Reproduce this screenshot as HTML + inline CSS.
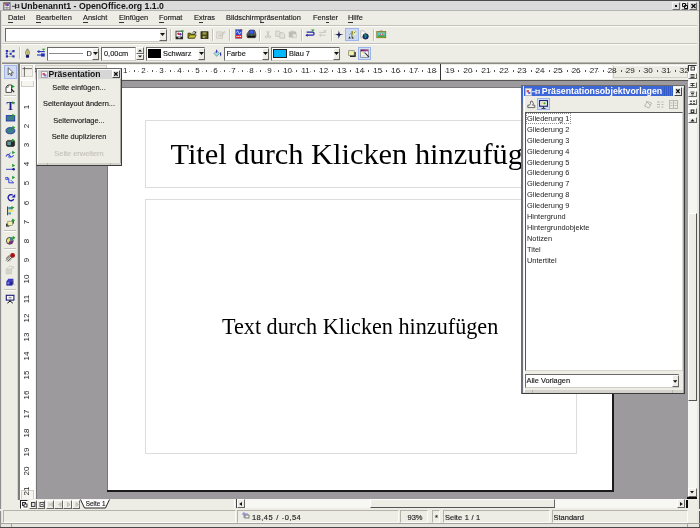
<!DOCTYPE html>
<html lang="de"><head><meta charset="utf-8"><title>Unbenannt1 - OpenOffice.org 1.1.0</title>
<style>
html,body{margin:0;padding:0;}
body{width:700px;height:528px;overflow:hidden;position:relative;background:#eeede5;font-family:"Liberation Sans",sans-serif;font-size:7.4px;color:#222;}
div,span,svg{position:absolute;box-sizing:border-box;}
span{white-space:nowrap;line-height:1;}
.t{font-size:7.4px;color:#1c1c1c;-webkit-text-stroke-width:0.15px;}
.m u{text-decoration:none;display:inline-block;position:static;height:8.6px;border-bottom:1px solid #333;}
.sunk{background:#fff;border:1.3px solid #6a6a6a;border-right:1px solid #cfcec6;border-bottom:1px solid #cfcec6;}
.btn{background:#eeede5;border:1px solid #fff;border-right-color:#666;border-bottom-color:#666;}
.sepv{width:2px;border-left:1px solid #c4c3bb;border-right:1px solid #fbfbf8;}
.seph{height:2px;border-top:1px solid #c4c3bb;border-bottom:1px solid #fbfbf8;}
.rt{font-size:8px;color:#222;transform:translate(-50%,0);}
.vt{font-size:8px;color:#222;transform:translate(-50%,-50%) rotate(-90deg);}
.ic{overflow:visible;filter:blur(0.25px);}
.li{font-size:7.4px;color:#222;left:527px;}
</style></head><body><div id="app" style="left:0;top:0;width:700px;height:528px;overflow:hidden;will-change:transform;">

<div style="left:0px;top:0px;width:700px;height:10.8px;background:#dbdbdb;border-bottom:0.8px solid #b4b4b4;"></div>
<div style="left:0px;top:0px;width:700px;height:0.7px;background:#4c4c4c;"></div>
<svg class="ic" style="left:3px;top:2px;" width="8" height="8.5" viewBox="0 0 8 8.5"><rect x="0.300" y="0.300" width="7.200" height="7.800" fill="#5a5a5a"/><rect x="1.300" y="1.800" width="5.200" height="5.600" fill="#f4f4f4"/><rect x="1.600" y="1.600" width="2.400" height="2.200" fill="#cc5566"/><rect x="3.600" y="1.800" width="2.200" height="2.200" fill="#4a4ad0"/><path d="M3.900 4.400v3M1.300 5.800h5.200" stroke="#666" stroke-width="0.700"/></svg>
<svg style="left:11.500px;top:2.500px;" width="8" height="7" viewBox="0 0 8 7"><path d="M0 3.300h3" stroke="#333" stroke-width="0.900"/><path d="M3.500 0.800v5M6.700 1.300v4" stroke="#222" stroke-width="1.100"/><path d="M3.500 2.100h3.200M3.500 4.500h3.200" stroke="#333" stroke-width="0.700"/></svg>
<span class="tt" style="left:21px;top:1.7px;font-size:8.7px;font-weight:bold;color:#111;">Unbenannt1 - OpenOffice.org 1.1.0</span>
<div style="left:672.3px;top:2.2px;width:7.6px;height:7.6px;background:#dedede;border:1px solid #f4f4f4;border-right-color:#6c6c6c;border-bottom-color:#6c6c6c;"></div>
<div style="left:680.7px;top:2.2px;width:7.6px;height:7.6px;background:#dedede;border:1px solid #f4f4f4;border-right-color:#6c6c6c;border-bottom-color:#6c6c6c;"></div>
<div style="left:689px;top:2.2px;width:7.6px;height:7.6px;background:#dedede;border:1px solid #f4f4f4;border-right-color:#6c6c6c;border-bottom-color:#6c6c6c;"></div>
<svg style="left:672px;top:2px;" width="26" height="8" viewBox="0 0 26 8"><rect x="3" y="3" width="2" height="2" fill="#111"/><path d="M10.5 1.5h3v3h-3zM12.5 3.5h3v3h-3z" stroke="#111" stroke-width="1" fill="none"/><path d="M19.5 2l4 4M23.5 2l-4 4" stroke="#111" stroke-width="1.4"/></svg>
<span class="t m" style="left:8px;top:13.9px;"><u>D</u>atei</span>
<span class="t m" style="left:36px;top:13.9px;"><u>B</u>earbeiten</span>
<span class="t m" style="left:83px;top:13.9px;"><u>A</u>nsicht</span>
<span class="t m" style="left:119px;top:13.9px;"><u>E</u>infügen</span>
<span class="t m" style="left:159px;top:13.9px;"><u>F</u>ormat</span>
<span class="t m" style="left:194px;top:13.9px;">E<u>x</u>tras</span>
<span class="t m" style="left:226px;top:13.9px;">Bildschirm<u>p</u>räsentation</span>
<span class="t m" style="left:313px;top:13.9px;">Fen<u>s</u>ter</span>
<span class="t m" style="left:348px;top:13.9px;"><u>H</u>ilfe</span>
<div class="seph" style="left:0px;top:25px;width:700px;height:2px;"></div>
<div class="sunk" style="left:5px;top:28px;width:162px;height:13.5px;"></div>
<div class="btn" style="left:158.5px;top:29px;width:8px;height:11.5px;"></div>
<svg style="left:160px;top:33px;" width="5" height="3" viewBox="0 0 5 3"><path d="M0 0h5L2.5 3z" fill="#111"/></svg>
<div class="sepv" style="left:169.5px;top:29px;width:2px;height:12px;"></div>
<div class="sepv" style="left:211.5px;top:29px;width:2px;height:12px;"></div>
<div class="sepv" style="left:229px;top:29px;width:2px;height:12px;"></div>
<div class="sepv" style="left:258.5px;top:29px;width:2px;height:12px;"></div>
<div class="sepv" style="left:300.5px;top:29px;width:2px;height:12px;"></div>
<div class="sepv" style="left:330.5px;top:29px;width:2px;height:12px;"></div>
<div class="sepv" style="left:372.5px;top:29px;width:2px;height:12px;"></div>
<div class="seph" style="left:0px;top:43px;width:700px;height:2px;"></div>
<svg class="ic" style="left:175px;top:29.5px;" width="10" height="10" viewBox="0 0 10 10"><rect x="1" y="1.2" width="6.6" height="7.6" fill="#fff" stroke="#333" stroke-width="0.9"/><rect x="1" y="6.6" width="6.6" height="2.4" fill="#222"/><rect x="3.2" y="7.2" width="2.2" height="1" fill="#ddd"/><circle cx="3.4" cy="3.8" r="1.2" fill="#cc3344"/><circle cx="5.4" cy="4.3" r="1.2" fill="#6633bb"/><path d="M5.6 0.6h3.6l-1.8 2.2z" fill="#1f9a2c"/></svg>
<svg class="ic" style="left:187px;top:29.5px;" width="10" height="10" viewBox="0 0 10 10"><path d="M1 3.2h2.6l0.8 0.9h3.2v4H1z" fill="#8e8a1c" stroke="#33330a" stroke-width="0.8"/><path d="M1 8.1l1.6-3.2h6.6l-1.6 3.2z" fill="#c9c43c" stroke="#33330a" stroke-width="0.7"/><path d="M5.6 2.6c1-1.2 2.2-1.2 3-0.4" stroke="#111" stroke-width="0.8" fill="none"/><path d="M9.2 1.2v2.2h-2.2z" fill="#111"/></svg>
<svg class="ic" style="left:200px;top:29.5px;" width="10" height="10" viewBox="0 0 10 10"><rect x="1" y="1.8" width="7" height="6.6" fill="#4a4a12" stroke="#1c1c05" stroke-width="0.8"/><rect x="2.6" y="2.2" width="3.8" height="2.4" fill="#9a9a52"/><rect x="2.8" y="6" width="3.4" height="2.2" fill="#b4b47a"/><rect x="4.8" y="6.4" width="0.9" height="1.6" fill="#222"/></svg>
<svg class="ic" style="left:216px;top:29.5px;" width="10" height="10" viewBox="0 0 10 10"><g stroke="#c6c5bd" stroke-width="0.9" fill="none"><rect x="0.8" y="2" width="5.6" height="6.2"/><path d="M2 4h3M2 5.8h2.4M4 7l1-2.4 3.6-3 0.6 0.8-3.4 3.2z"/></g></svg>
<svg class="ic" style="left:235px;top:29.3px;" width="8" height="10" viewBox="0 0 8 10"><rect x="0.5" y="0.5" width="6.4" height="8.8" fill="#2348dd"/><rect x="0.5" y="5.9" width="6.4" height="3.4" fill="#e22222"/><path d="M5 0.3h2.1v2.3z" fill="#7a1414"/><path d="M1.6 3.6c0.8-2 1.6-2 2 0s1.4 1.6 2-0.4" stroke="#fff" stroke-width="0.8" fill="none"/><path d="M1.4 7.4h4.6" stroke="#fff" stroke-width="1" stroke-dasharray="1.2 0.5"/><rect x="0.5" y="0.5" width="6.4" height="8.8" fill="none" stroke="#7a7a8a" stroke-width="0.5"/></svg>
<svg class="ic" style="left:245.5px;top:29.3px;" width="11" height="10" viewBox="0 0 11 10"><path d="M1 4.800L3.400 1.400h5.200l1.200 3.400v2.600c0 0.900-0.500 1.300-1.300 1.300H2.200C1.400 8.700 1 8.200 1 7.400z" fill="#6a6a6a" stroke="#2a2a2a" stroke-width="0.700"/><path d="M3.700 1h4.400l-0.700 4H2.900z" fill="#3a5af0" stroke="#334" stroke-width="0.500"/><path d="M1.200 5.400h8.400v2c0 0.900-0.500 1.300-1.300 1.300H2.400C1.600 8.700 1.200 8.200 1.200 7.400z" fill="#3c3c3c"/><rect x="2" y="7" width="6.800" height="1.200" fill="#0c0c0c"/><rect x="4.800" y="5.700" width="1.800" height="0.900" fill="#22aa33"/></svg>
<svg class="ic" style="left:263.5px;top:30.3px;" width="8" height="9" viewBox="0 0 8 9"><g stroke="#c4c3bb" stroke-width="0.9" fill="none"><path d="M2.6 0.8l2.2 5M5.4 0.8l-2.2 5"/><circle cx="2.4" cy="6.8" r="1.1"/><circle cx="5.6" cy="6.800" r="1.100"/></g></svg>
<svg class="ic" style="left:275px;top:30.3px;" width="11" height="9" viewBox="0 0 11 9"><g stroke="#c4c3bb" stroke-width="0.9" fill="#e4e3db"><path d="M0.8 1h3.4l1.400 1.400v4H0.800z"/><path d="M4.800 2.800h3.400l1.400 1.400v4H4.800z"/></g></svg>
<svg class="ic" style="left:288px;top:30px;" width="10" height="9" viewBox="0 0 10 9"><rect x="0.8" y="1.6" width="7.4" height="6" rx="0.6" fill="#bdbcb4"/><rect x="3" y="0.700" width="3" height="1.600" fill="#c8c7bf"/><rect x="4.600" y="4" width="3.800" height="3.800" fill="#e6e5dd" stroke="#c4c3bb" stroke-width="0.6"/></svg>
<svg class="ic" style="left:305px;top:29.3px;" width="11" height="9" viewBox="0 0 11 9"><path d="M1.6 3.200h6.200c1.600 0 1.600 3 0 3H1.600" stroke="#2222a8" stroke-width="1.3" fill="none"/><path d="M0.400 6.200l2.200-1.500v3z" fill="#2222a8"/><path d="M6 0.500h3.600l-1.800 2.300z" fill="#1f9a2c"/></svg>
<svg class="ic" style="left:318px;top:29.3px;" width="10" height="9" viewBox="0 0 10 9"><g stroke="#c4c3bb" stroke-width="0.9" fill="none"><path d="M1 3.400h6.400M7.400 6.200H2M5.600 1.600l2.600 1.800M3 7.600L1.400 6.200 3 5"/><path d="M6 1h2.800l-1.400 1.800z" fill="#d0cfc7" stroke="none"/></g></svg>
<svg class="ic" style="left:334px;top:29.5px;" width="10" height="10" viewBox="0 0 10 10"><path d="M4.900 0.300C5.100 2.800 5.600 3.800 6.200 4 7.200 4.200 8.400 4.300 9.500 4.600 8.400 4.900 6.800 5 6 5.400 5.400 6 5.100 7.400 4.900 9.100 4.700 7.400 4.400 6 3.800 5.400 3 5 1.400 4.900 0.300 4.600 1.400 4.300 2.600 4.200 3.600 4 4.200 3.800 4.700 2.800 4.900 0.300z" fill="#15153f"/><path d="M4.900 0.300C5.100 2.800 5.600 3.800 6.200 4L4.900 4.700zM4.900 9.100C4.700 7.400 4.400 6 3.800 5.400L4.900 4.700z" fill="#3a4ab0"/></svg>
<div style="left:345px;top:28px;width:13.6px;height:12.8px;background:#cbd8f1;border:1px solid #9fb7e8;"></div>
<svg class="ic" style="left:346.5px;top:29.5px;" width="11" height="10" viewBox="0 0 11 10"><rect x="4.600" y="0.800" width="4.600" height="4" fill="#efefb0"/><path d="M4.400 1.200c1.400-0.600 2 0.400 1.600 1.600l-0.600 2.600 1 3H4.600l-0.400-2.600z" fill="#8a8a34"/><path d="M1.400 8.600l1.200-2.400 1.200 2.400z" fill="#1e2a3a"/><path d="M5 8.600l0.800-2 0.900 2z" fill="#1e2a3a"/><path d="M2.400 4.600l1.400-1.400" stroke="#666" stroke-width="0.700"/><path d="M6.600 3.200l2-1.600" stroke="#6a6a2a" stroke-width="0.800"/></svg>
<svg class="ic" style="left:360px;top:29.5px;" width="10" height="10" viewBox="0 0 10 10"><path d="M0.800 0.800h3l1.400 1.400v5.400H0.800z" fill="#fafafa" stroke="#aaa" stroke-width="0.700"/><circle cx="5.600" cy="6.400" r="2.700" fill="#123a9a" stroke="#111" stroke-width="0.700"/><path d="M4.200 5.200c1-0.800 2-0.200 1.800 0.800s-1 1-0.800 2" stroke="#2bb43a" stroke-width="1.100" fill="none"/></svg>
<svg class="ic" style="left:375.8px;top:28.8px;" width="11" height="10" viewBox="0 0 11 10"><path d="M3.800 2.600c0-1.600 3-1.600 3 0" stroke="#999" stroke-width="0.800" fill="none"/><rect x="0.800" y="2.600" width="9" height="6.200" fill="#b8a81e" stroke="#6a5c0c" stroke-width="0.600"/><rect x="1.800" y="3.500" width="7" height="4.300" fill="#46cfe0"/><rect x="1.800" y="6.400" width="7" height="1.400" fill="#2fa83a"/><circle cx="5.600" cy="5.600" r="1.300" fill="#e84a4a"/><circle cx="5.600" cy="5.200" r="0.600" fill="#fff"/></svg>
<div class="sepv" style="left:18.5px;top:47px;width:2px;height:12px;"></div>
<svg class="ic" style="left:5px;top:48.5px;" width="11" height="10" viewBox="0 0 11 10"><path d="M2 2.200h6.400M2 7.400h6.400M2 2.200v5.200" stroke="#999" stroke-width="0.800" fill="none"/><path d="M8.400 2.200L5.600 4.800 8.400 7.400" stroke="#999" stroke-width="0.800" fill="none"/><g fill="#2434b8"><rect x="0.800" y="1" width="2.200" height="2.200"/><rect x="7.400" y="1" width="2.200" height="2.200"/><rect x="0.800" y="6.300" width="2.200" height="2.200"/><rect x="7.400" y="6.300" width="2.200" height="2.200"/><rect x="4.600" y="3.800" width="2" height="2"/><rect x="0.800" y="3.800" width="1.600" height="1.600"/></g></svg>
<svg class="ic" style="left:24px;top:48px;" width="7" height="11" viewBox="0 0 7 11"><path d="M3.500 0.800C5.400 3 5.800 5 4.800 7H2.200C1.200 5 1.600 3 3.500 0.800z" fill="#dede98" stroke="#55552a" stroke-width="0.700"/><path d="M3.500 2.400v4" stroke="#8a8a4a" stroke-width="0.600"/><rect x="1.900" y="7" width="3.200" height="2.800" rx="0.800" fill="#141466"/></svg>
<svg class="ic" style="left:35.5px;top:47.6px;" width="10" height="10" viewBox="0 0 10 10"><path d="M0.800 3.600l2.600-1.600v3.200z" fill="#2434b8"/><path d="M3 3.600h5.800" stroke="#2434b8" stroke-width="1.100"/><path d="M1 7h5" stroke="#2434b8" stroke-width="1.100"/><path d="M5 5.400h3.800v3.200H5z" fill="#2434b8"/><path d="M5.800 0.800h3.600l-1.800 2z" fill="#1f9a2c"/></svg>
<svg class="ic" style="left:212.5px;top:48.8px;" width="10" height="9" viewBox="0 0 10 9"><path d="M1 4.400L3.800 1.600 6.600 4.400 3.800 7.400z" fill="#8fe4e4" stroke="#888" stroke-width="0.800"/><path d="M3.600 0.800v3" stroke="#3a3ab8" stroke-width="1.100"/><path d="M7.200 3c1.200 0.800 1.400 3 0.600 4.600-0.800-0.600-1-3-0.600-4.600z" fill="#3030a8"/></svg>
<svg class="ic" style="left:347.5px;top:49.5px;" width="9" height="8" viewBox="0 0 9 8"><rect x="2" y="2" width="5.700" height="4.900" fill="#111"/><rect x="0.700" y="0.700" width="5.500" height="4.700" fill="#f2f2a2" stroke="#777" stroke-width="0.700"/></svg>
<div style="left:358px;top:46.600px;width:13px;height:13.100px;background:#d5e0f5;border:1px solid #98b3ea;"></div>
<svg class="ic" style="left:359.5px;top:48.6px;" width="10" height="10" viewBox="0 0 10 10"><defs><linearGradient id="pg" x1="0" y1="0" x2="1" y2="0"><stop offset="0" stop-color="#5a165e"/><stop offset="1" stop-color="#cc3a9c"/></linearGradient></defs><rect x="0.700" y="0.700" width="7.600" height="7.600" fill="#fff" stroke="#777" stroke-width="0.800"/><rect x="0.700" y="0.700" width="7.600" height="1.700" fill="url(#pg)"/><rect x="2" y="3" width="2.600" height="2" fill="#f4f0a0"/><circle cx="4.600" cy="3.600" r="1.100" fill="#8899e8" opacity="0.800"/><path d="M5.200 4.200l3.800 4" stroke="#333" stroke-width="1.100"/><path d="M1.600 6.800h4" stroke="#bbb" stroke-width="0.700"/></svg>
<div class="sunk" style="left:46.5px;top:46.5px;width:52.5px;height:14px;"></div>
<div style="left:48.5px;top:52.5px;width:34px;height:1.2px;background:#8c8c8c;"></div>
<span class="t" style="left:86.5px;top:49.5px;">D</span>
<div class="btn" style="left:92px;top:47.5px;width:7px;height:12px;"></div>
<svg style="left:93px;top:52px;" width="5" height="3" viewBox="0 0 5 3"><path d="M0 0h5L2.5 3z" fill="#111"/></svg>
<div class="sunk" style="left:101px;top:46.5px;width:34.5px;height:14px;"></div>
<span class="t" style="left:104px;top:49.5px;">0,00cm</span>
<div class="btn" style="left:136px;top:47px;width:7.5px;height:6.5px;"></div>
<div class="btn" style="left:136px;top:53.5px;width:7.5px;height:6.5px;"></div>
<svg style="left:138px;top:49px;" width="4" height="9" viewBox="0 0 4 9"><path d="M0 2.5h4L2 0.5zM0 6.5h4L2 8.5z" fill="#111"/></svg>
<div class="sunk" style="left:145.5px;top:46.5px;width:59.5px;height:14px;"></div>
<div style="left:147.5px;top:48.5px;width:13px;height:9.5px;background:#000;"></div>
<span class="t" style="left:163px;top:49.5px;">Schwarz</span>
<div class="btn" style="left:198px;top:47.5px;width:7px;height:12px;"></div>
<svg style="left:199px;top:52px;" width="5" height="3" viewBox="0 0 5 3"><path d="M0 0h5L2.5 3z" fill="#111"/></svg>
<div class="sunk" style="left:224px;top:46.5px;width:44.5px;height:14px;"></div>
<span class="t" style="left:226.5px;top:49.5px;">Farbe</span>
<div class="btn" style="left:261.5px;top:47.5px;width:7px;height:12px;"></div>
<svg style="left:262.5px;top:52px;" width="5" height="3" viewBox="0 0 5 3"><path d="M0 0h5L2.5 3z" fill="#111"/></svg>
<div class="sunk" style="left:271px;top:46.5px;width:69px;height:14px;"></div>
<div style="left:273px;top:48.5px;width:13.5px;height:9.5px;background:#00b8ff;border:1px solid #222;"></div>
<span class="t" style="left:289px;top:49.5px;">Blau 7</span>
<div class="btn" style="left:332.5px;top:47.5px;width:7px;height:12px;"></div>
<svg style="left:333.5px;top:52px;" width="5" height="3" viewBox="0 0 5 3"><path d="M0 0h5L2.5 3z" fill="#111"/></svg>
<div style="left:0px;top:62px;width:700px;height:2px;border-top:1px solid #b5b4ad;border-bottom:1px solid #8a8a86;"></div>
<div style="left:17px;top:64px;width:2.5px;height:436px;border-left:1px solid #d6d5cd;background:#7c7c78;"></div>
<div style="left:4px;top:65px;width:13px;height:13.5px;background:#cfdcf3;border:1px solid #9fb6e6;"></div>
<div class="seph" style="left:4px;top:95px;width:12px;height:2px;"></div>
<div class="seph" style="left:4px;top:188px;width:12px;height:2px;"></div>
<div class="seph" style="left:4px;top:230px;width:12px;height:2px;"></div>
<div class="seph" style="left:4px;top:247.5px;width:12px;height:2px;"></div>
<div class="seph" style="left:4px;top:289px;width:12px;height:2px;"></div>
<svg class="ic" style="left:7px;top:67px;" width="8" height="10" viewBox="0 0 8 10"><path d="M1.200 0.800v7l1.800-1.600 1.200 2.600 1-0.500-1.200-2.500h2.400z" fill="#fff" stroke="#444" stroke-width="0.800"/></svg>
<svg class="ic" style="left:5px;top:83.5px;" width="11" height="10" viewBox="0 0 11 10"><path d="M1 3l2-2h3.600v7.400H1z" fill="#fff" stroke="#333" stroke-width="0.900"/><path d="M1.200 3.200h2v-2" stroke="#333" stroke-width="0.700" fill="none"/><path d="M6.200 5l3 3.200" stroke="#222" stroke-width="1.200"/><path d="M6.8 0.8l3 1.6-3 1.8z" fill="#1f9a2c"/></svg>
<span style="left:6.600px;top:99.500px;font-family:'Liberation Serif',serif;font-weight:bold;font-size:12px;color:#1a1a8c;">T</span>
<svg class="ic" style="left:12.4px;top:101.3px;" width="4" height="4" viewBox="0 0 4 4"><path d="M0.200 0.200l3 1.500-3 1.600z" fill="#1f9a2c"/></svg>
<svg class="ic" style="left:5px;top:112.6px;" width="11" height="9" viewBox="0 0 11 9"><rect x="1.300" y="2.600" width="8.400" height="5.400" fill="#3b7f86" stroke="#2434a8" stroke-width="0.900"/><path d="M7.4 0.8l3 1.6-3 1.8z" fill="#1f9a2c"/></svg>
<svg class="ic" style="left:5px;top:124.8px;" width="11" height="10" viewBox="0 0 11 10"><ellipse cx="5.400" cy="5.700" rx="4.400" ry="3.100" fill="#3b7f86" stroke="#2434a8" stroke-width="0.900"/><path d="M7.4 0.8l3 1.6-3 1.8z" fill="#1f9a2c"/></svg>
<svg class="ic" style="left:5px;top:137.6px;" width="11" height="10" viewBox="0 0 11 10"><path d="M1.400 4c0-1 1-1.600 2-1.600h4.800c1 0 1.400 0.600 1.400 1.400v3c0 1-0.600 1.600-1.600 1.600H3C2 8.400 1.400 7.800 1.400 7z" fill="#2a2a2a" stroke="#111" stroke-width="0.600"/><rect x="2.300" y="4" width="3.600" height="3.200" fill="#5a9aa0"/><path d="M2 3.200h6" stroke="#999" stroke-width="0.600"/><path d="M7 0.7l3 1.6-3 1.8z" fill="#1f9a2c"/></svg>
<svg class="ic" style="left:5px;top:150.4px;" width="11" height="10" viewBox="0 0 11 10"><path d="M1 6.400c1.400-2.800 2.600-2.400 3.400-0.800s2.600 2.400 4.200-0.400" stroke="#3344cc" stroke-width="1.100" fill="none"/><path d="M3.600 5l2-2.400" stroke="#3344cc" stroke-width="0.800"/><circle cx="4.600" cy="6.800" r="1" fill="none" stroke="#3344cc" stroke-width="0.700"/><path d="M7.2 0.8l3 1.6-3 1.8z" fill="#1f9a2c"/></svg>
<svg class="ic" style="left:5px;top:163.4px;" width="11" height="9" viewBox="0 0 11 9"><path d="M1 6.300h7" stroke="#3344cc" stroke-width="1"/><circle cx="8.600" cy="6.300" r="1.300" fill="#1a1a8c"/><path d="M7.2 0.8l3 1.6-3 1.8z" fill="#1f9a2c"/></svg>
<svg class="ic" style="left:5px;top:175.3px;" width="11" height="10" viewBox="0 0 11 10"><path d="M1.200 3.400h2.600v4.400h5" stroke="#3344cc" stroke-width="1" fill="none"/><rect x="0.800" y="2.400" width="2" height="2" fill="#eeede5" stroke="#3344cc" stroke-width="0.800"/><path d="M5.600 5.600c1.600 0 2.400 1 2.400 2.600" stroke="#3344cc" stroke-width="0.800" fill="none"/><path d="M7.2 0.8l3 1.6-3 1.8z" fill="#1f9a2c"/></svg>
<svg class="ic" style="left:5.5px;top:193.3px;" width="10" height="10" viewBox="0 0 10 10"><path d="M6.800 2.200A3 3 0 1 0 7.800 6" stroke="#2222a8" stroke-width="1.400" fill="none"/><path d="M5.400 4.600h3.800V1z" fill="#2222a8"/></svg>
<svg class="ic" style="left:6px;top:205px;" width="10" height="11" viewBox="0 0 10 11"><path d="M1.600 1.400v8.800" stroke="#2434b8" stroke-width="1.100"/><rect x="2.400" y="2" width="4.200" height="2.400" fill="#4a9aa0"/><rect x="2.400" y="4.800" width="5.400" height="2.200" fill="#efe67a"/><rect x="2.400" y="7.400" width="2.600" height="2" fill="#4a9aa0"/><path d="M5.4 1l3 1.6-3 1.8z" fill="#1f9a2c"/></svg>
<svg class="ic" style="left:5px;top:218.3px;" width="11" height="10" viewBox="0 0 11 10"><rect x="1" y="5.600" width="3.400" height="3" fill="#333"/><rect x="6" y="2.600" width="3" height="3" fill="#555"/><rect x="2.800" y="3.200" width="4.600" height="4.200" fill="#f2f29a" stroke="#777" stroke-width="0.600"/><path d="M7.2 0.6l3 1.6-3 1.8z" fill="#1f9a2c"/></svg>
<svg class="ic" style="left:5px;top:234.6px;" width="11" height="10" viewBox="0 0 11 10"><circle cx="4.800" cy="5.800" r="3.400" fill="#f0e870" stroke="#222" stroke-width="0.800"/><path d="M4.800 5.800V2.400A3.400 3.400 0 0 1 8.200 5.800z" fill="#3b8a90"/><path d="M4.800 5.800h3.400A3.400 3.400 0 0 1 3 8.700z" fill="#7a2a8a"/><path d="M8.600 0.600l0.600 1.400 1.400 0.400-1.200 0.800 0.200 1.400-1.200-0.800-1.200 0.600 0.400-1.400-0.800-1 1.400-0.200z" fill="#1f9a2c"/></svg>
<svg class="ic" style="left:5px;top:250.5px;" width="11" height="12" viewBox="0 0 11 12"><path d="M1 9.600l5-5M2.400 10.400l5-4.600M1 7.600l3.600-3.400" stroke="#444" stroke-width="0.900"/><path d="M3.600 10.600l3.600-3" stroke="#999" stroke-width="0.800"/><circle cx="7.600" cy="4.400" r="2.400" fill="#a81414"/></svg>
<svg class="ic" style="left:5px;top:264.8px;" width="11" height="10" viewBox="0 0 11 10"><g stroke="#cccbc3" stroke-width="0.900" fill="none"><rect x="1.200" y="4" width="5.400" height="4.800" fill="#dddcd4"/><path d="M2.400 3.800c0-3 3.800-3.400 5.400-1.400M8.400 1v2.200H6.200M2 5.600h3.600M2 7.200h3.600"/></g></svg>
<svg class="ic" style="left:5px;top:277.3px;" width="11" height="10" viewBox="0 0 11 10"><path d="M1.400 4.200l2-2.400h5l-1.200 2.400z" fill="#3a3ac8"/><path d="M1.400 4.200h5.800v4.400H1.400z" fill="#2222a8"/><path d="M7.200 4.200l1.200-2.400v4.400l-1.200 2.400z" fill="#15157a"/><rect x="2.400" y="5.200" width="2" height="2" fill="#8a8ad8"/><path d="M8.400 7.400l1.400 0.600" stroke="#999" stroke-width="0.800"/></svg>
<svg class="ic" style="left:5px;top:294px;" width="11" height="10" viewBox="0 0 11 10"><rect x="1.300" y="1.300" width="7.600" height="4.800" fill="#fff" stroke="#1a1a7a" stroke-width="1.100"/><rect x="3.600" y="2.800" width="3" height="1.600" fill="#999"/><path d="M5.100 6.200v1M2.400 9.200l2.700-2.200 2.700 2.200" stroke="#111" stroke-width="1" fill="none"/></svg>
<div style="left:36px;top:80px;width:652px;height:419px;background:#9c9a9c;border-top:1px solid #555;border-left:1px solid #777;"></div>
<div style="left:107px;top:87px;width:506.5px;height:404.5px;background:#1a1a1a;"></div>
<div style="left:107px;top:87px;width:505px;height:402.7px;background:#fff;border-top:1px solid #777;border-left:1px solid #777;"></div>
<div style="left:145px;top:120px;width:432px;height:68.4px;border:1px solid #dcdcdc;"></div>
<div style="left:145px;top:199px;width:432px;height:254.5px;border:1px solid #dcdcdc;"></div>
<span style="left:145px;top:120px;width:432px;height:68px;text-align:center;font-family:'Liberation Serif',serif;font-size:30.4px;line-height:68px;color:#000;">Titel durch Klicken hinzufügen</span>
<span style="left:144.15px;top:199.6px;width:432px;height:254.5px;text-align:center;font-family:'Liberation Serif',serif;font-size:22.2px;line-height:254.5px;color:#000;">Text durch Klicken hinzufügen</span>
<div style="left:19.5px;top:64px;width:668.5px;height:16px;background:#eeede5;"></div>
<div style="left:107.3px;top:64.5px;width:505px;height:14.5px;background:#fff;"></div>
<div style="left:35px;top:64.5px;width:72.3px;height:14.5px;background:#eeede5;border:1px solid #d0cfc6;"></div>
<div style="left:613.3px;top:65.3px;width:74.7px;height:12.4px;background:#eeede5;border:1px solid #d0cfc6;border-top-color:#fff;"></div>
<span class="rt" style="left:35.2px;top:66.7px;">4</span>
<div style="left:39.2px;top:70.6px;width:1px;height:1px;background:#aaa;"></div>
<div style="left:43.7px;top:70.1px;width:1px;height:2px;background:#555;"></div>
<div style="left:48.2px;top:70.6px;width:1px;height:1px;background:#aaa;"></div>
<span class="rt" style="left:53.2px;top:66.7px;">3</span>
<div style="left:57.2px;top:70.6px;width:1px;height:1px;background:#aaa;"></div>
<div style="left:61.7px;top:70.1px;width:1px;height:2px;background:#555;"></div>
<div style="left:66.2px;top:70.6px;width:1px;height:1px;background:#aaa;"></div>
<span class="rt" style="left:71.2px;top:66.7px;">2</span>
<div style="left:75.2px;top:70.6px;width:1px;height:1px;background:#aaa;"></div>
<div style="left:79.8px;top:70.1px;width:1px;height:2px;background:#555;"></div>
<div style="left:84.3px;top:70.6px;width:1px;height:1px;background:#aaa;"></div>
<span class="rt" style="left:89.3px;top:66.7px;">1</span>
<div style="left:93.3px;top:70.6px;width:1px;height:1px;background:#aaa;"></div>
<div style="left:97.8px;top:70.1px;width:1px;height:2px;background:#555;"></div>
<div style="left:102.3px;top:70.6px;width:1px;height:1px;background:#aaa;"></div>
<div style="left:111.3px;top:70.6px;width:1px;height:1px;background:#aaa;"></div>
<div style="left:115.8px;top:70.1px;width:1px;height:2px;background:#555;"></div>
<div style="left:120.3px;top:70.6px;width:1px;height:1px;background:#aaa;"></div>
<span class="rt" style="left:125.3px;top:66.7px;">1</span>
<div style="left:129.3px;top:70.6px;width:1px;height:1px;background:#aaa;"></div>
<div style="left:133.8px;top:70.1px;width:1px;height:2px;background:#555;"></div>
<div style="left:138.4px;top:70.6px;width:1px;height:1px;background:#aaa;"></div>
<span class="rt" style="left:143.4px;top:66.7px;">2</span>
<div style="left:147.4px;top:70.6px;width:1px;height:1px;background:#aaa;"></div>
<div style="left:151.9px;top:70.1px;width:1px;height:2px;background:#555;"></div>
<div style="left:156.4px;top:70.6px;width:1px;height:1px;background:#aaa;"></div>
<span class="rt" style="left:161.4px;top:66.7px;">3</span>
<div style="left:165.4px;top:70.6px;width:1px;height:1px;background:#aaa;"></div>
<div style="left:169.9px;top:70.1px;width:1px;height:2px;background:#555;"></div>
<div style="left:174.4px;top:70.6px;width:1px;height:1px;background:#aaa;"></div>
<span class="rt" style="left:179.4px;top:66.7px;">4</span>
<div style="left:183.4px;top:70.6px;width:1px;height:1px;background:#aaa;"></div>
<div style="left:187.9px;top:70.1px;width:1px;height:2px;background:#555;"></div>
<div style="left:192.4px;top:70.6px;width:1px;height:1px;background:#aaa;"></div>
<span class="rt" style="left:197.4px;top:66.7px;">5</span>
<div style="left:201.5px;top:70.6px;width:1px;height:1px;background:#aaa;"></div>
<div style="left:206.0px;top:70.1px;width:1px;height:2px;background:#555;"></div>
<div style="left:210.5px;top:70.6px;width:1px;height:1px;background:#aaa;"></div>
<span class="rt" style="left:215.5px;top:66.7px;">6</span>
<div style="left:219.5px;top:70.6px;width:1px;height:1px;background:#aaa;"></div>
<div style="left:224.0px;top:70.1px;width:1px;height:2px;background:#555;"></div>
<div style="left:228.5px;top:70.6px;width:1px;height:1px;background:#aaa;"></div>
<span class="rt" style="left:233.5px;top:66.7px;">7</span>
<div style="left:237.5px;top:70.6px;width:1px;height:1px;background:#aaa;"></div>
<div style="left:242.0px;top:70.1px;width:1px;height:2px;background:#555;"></div>
<div style="left:246.5px;top:70.6px;width:1px;height:1px;background:#aaa;"></div>
<span class="rt" style="left:251.5px;top:66.7px;">8</span>
<div style="left:255.5px;top:70.6px;width:1px;height:1px;background:#aaa;"></div>
<div style="left:260.1px;top:70.1px;width:1px;height:2px;background:#555;"></div>
<div style="left:264.6px;top:70.6px;width:1px;height:1px;background:#aaa;"></div>
<span class="rt" style="left:269.6px;top:66.7px;">9</span>
<div style="left:273.6px;top:70.6px;width:1px;height:1px;background:#aaa;"></div>
<div style="left:278.1px;top:70.1px;width:1px;height:2px;background:#555;"></div>
<div style="left:282.6px;top:70.6px;width:1px;height:1px;background:#aaa;"></div>
<span class="rt" style="left:287.6px;top:66.7px;">10</span>
<div style="left:291.6px;top:70.6px;width:1px;height:1px;background:#aaa;"></div>
<div style="left:296.1px;top:70.1px;width:1px;height:2px;background:#555;"></div>
<div style="left:300.6px;top:70.6px;width:1px;height:1px;background:#aaa;"></div>
<span class="rt" style="left:305.6px;top:66.7px;">11</span>
<div style="left:309.6px;top:70.6px;width:1px;height:1px;background:#aaa;"></div>
<div style="left:314.1px;top:70.1px;width:1px;height:2px;background:#555;"></div>
<div style="left:318.7px;top:70.6px;width:1px;height:1px;background:#aaa;"></div>
<span class="rt" style="left:323.7px;top:66.7px;">12</span>
<div style="left:327.7px;top:70.6px;width:1px;height:1px;background:#aaa;"></div>
<div style="left:332.2px;top:70.1px;width:1px;height:2px;background:#555;"></div>
<div style="left:336.7px;top:70.6px;width:1px;height:1px;background:#aaa;"></div>
<span class="rt" style="left:341.7px;top:66.7px;">13</span>
<div style="left:345.7px;top:70.6px;width:1px;height:1px;background:#aaa;"></div>
<div style="left:350.2px;top:70.1px;width:1px;height:2px;background:#555;"></div>
<div style="left:354.7px;top:70.6px;width:1px;height:1px;background:#aaa;"></div>
<span class="rt" style="left:359.7px;top:66.7px;">14</span>
<div style="left:363.7px;top:70.6px;width:1px;height:1px;background:#aaa;"></div>
<div style="left:368.2px;top:70.1px;width:1px;height:2px;background:#555;"></div>
<div style="left:372.7px;top:70.6px;width:1px;height:1px;background:#aaa;"></div>
<span class="rt" style="left:377.8px;top:66.7px;">15</span>
<div style="left:381.8px;top:70.6px;width:1px;height:1px;background:#aaa;"></div>
<div style="left:386.3px;top:70.1px;width:1px;height:2px;background:#555;"></div>
<div style="left:390.8px;top:70.6px;width:1px;height:1px;background:#aaa;"></div>
<span class="rt" style="left:395.8px;top:66.7px;">16</span>
<div style="left:399.8px;top:70.6px;width:1px;height:1px;background:#aaa;"></div>
<div style="left:404.3px;top:70.1px;width:1px;height:2px;background:#555;"></div>
<div style="left:408.8px;top:70.6px;width:1px;height:1px;background:#aaa;"></div>
<span class="rt" style="left:413.8px;top:66.7px;">17</span>
<div style="left:417.8px;top:70.6px;width:1px;height:1px;background:#aaa;"></div>
<div style="left:422.3px;top:70.1px;width:1px;height:2px;background:#555;"></div>
<div style="left:426.8px;top:70.6px;width:1px;height:1px;background:#aaa;"></div>
<span class="rt" style="left:431.8px;top:66.7px;">18</span>
<div style="left:435.8px;top:70.6px;width:1px;height:1px;background:#aaa;"></div>
<div style="left:440.4px;top:70.1px;width:1px;height:2px;background:#555;"></div>
<div style="left:444.9px;top:70.6px;width:1px;height:1px;background:#aaa;"></div>
<span class="rt" style="left:449.9px;top:66.7px;">19</span>
<div style="left:453.9px;top:70.6px;width:1px;height:1px;background:#aaa;"></div>
<div style="left:458.4px;top:70.1px;width:1px;height:2px;background:#555;"></div>
<div style="left:462.9px;top:70.6px;width:1px;height:1px;background:#aaa;"></div>
<span class="rt" style="left:467.9px;top:66.7px;">20</span>
<div style="left:471.9px;top:70.6px;width:1px;height:1px;background:#aaa;"></div>
<div style="left:476.4px;top:70.1px;width:1px;height:2px;background:#555;"></div>
<div style="left:480.9px;top:70.6px;width:1px;height:1px;background:#aaa;"></div>
<span class="rt" style="left:485.9px;top:66.7px;">21</span>
<div style="left:489.9px;top:70.6px;width:1px;height:1px;background:#aaa;"></div>
<div style="left:494.4px;top:70.1px;width:1px;height:2px;background:#555;"></div>
<div style="left:499.0px;top:70.6px;width:1px;height:1px;background:#aaa;"></div>
<span class="rt" style="left:504.0px;top:66.7px;">22</span>
<div style="left:508.0px;top:70.6px;width:1px;height:1px;background:#aaa;"></div>
<div style="left:512.5px;top:70.1px;width:1px;height:2px;background:#555;"></div>
<div style="left:517.0px;top:70.6px;width:1px;height:1px;background:#aaa;"></div>
<span class="rt" style="left:522.0px;top:66.7px;">23</span>
<div style="left:526.0px;top:70.6px;width:1px;height:1px;background:#aaa;"></div>
<div style="left:530.5px;top:70.1px;width:1px;height:2px;background:#555;"></div>
<div style="left:535.0px;top:70.6px;width:1px;height:1px;background:#aaa;"></div>
<span class="rt" style="left:540.0px;top:66.7px;">24</span>
<div style="left:544.0px;top:70.6px;width:1px;height:1px;background:#aaa;"></div>
<div style="left:548.5px;top:70.1px;width:1px;height:2px;background:#555;"></div>
<div style="left:553.0px;top:70.6px;width:1px;height:1px;background:#aaa;"></div>
<span class="rt" style="left:558.0px;top:66.7px;">25</span>
<div style="left:562.1px;top:70.6px;width:1px;height:1px;background:#aaa;"></div>
<div style="left:566.6px;top:70.1px;width:1px;height:2px;background:#555;"></div>
<div style="left:571.1px;top:70.6px;width:1px;height:1px;background:#aaa;"></div>
<span class="rt" style="left:576.1px;top:66.7px;">26</span>
<div style="left:580.1px;top:70.6px;width:1px;height:1px;background:#aaa;"></div>
<div style="left:584.6px;top:70.1px;width:1px;height:2px;background:#555;"></div>
<div style="left:589.1px;top:70.6px;width:1px;height:1px;background:#aaa;"></div>
<span class="rt" style="left:594.1px;top:66.7px;">27</span>
<div style="left:598.1px;top:70.6px;width:1px;height:1px;background:#aaa;"></div>
<div style="left:602.6px;top:70.1px;width:1px;height:2px;background:#555;"></div>
<div style="left:607.1px;top:70.6px;width:1px;height:1px;background:#aaa;"></div>
<span class="rt" style="left:612.1px;top:66.7px;">28</span>
<div style="left:616.1px;top:70.6px;width:1px;height:1px;background:#aaa;"></div>
<div style="left:620.7px;top:70.1px;width:1px;height:2px;background:#555;"></div>
<div style="left:625.2px;top:70.6px;width:1px;height:1px;background:#aaa;"></div>
<span class="rt" style="left:630.2px;top:66.7px;">29</span>
<div style="left:634.2px;top:70.6px;width:1px;height:1px;background:#aaa;"></div>
<div style="left:638.7px;top:70.1px;width:1px;height:2px;background:#555;"></div>
<div style="left:643.2px;top:70.6px;width:1px;height:1px;background:#aaa;"></div>
<span class="rt" style="left:648.2px;top:66.7px;">30</span>
<div style="left:652.2px;top:70.6px;width:1px;height:1px;background:#aaa;"></div>
<div style="left:656.7px;top:70.1px;width:1px;height:2px;background:#555;"></div>
<div style="left:661.2px;top:70.6px;width:1px;height:1px;background:#aaa;"></div>
<span class="rt" style="left:666.2px;top:66.7px;">31</span>
<div style="left:670.2px;top:70.6px;width:1px;height:1px;background:#aaa;"></div>
<div style="left:674.7px;top:70.1px;width:1px;height:2px;background:#555;"></div>
<div style="left:679.3px;top:70.6px;width:1px;height:1px;background:#aaa;"></div>
<span class="rt" style="left:684.3px;top:66.7px;">32</span>
<div style="left:439.6px;top:64px;width:1px;height:16px;background:#333;"></div>
<div style="left:19.5px;top:64px;width:15px;height:16px;background:#fbfaf6;"></div>
<div style="left:21px;top:65.4px;width:12px;height:11.8px;background:#f3f2ea;border:1px solid #d4d3cb;"></div>
<svg style="left:21px;top:65px;" width="12" height="12" viewBox="0 0 12 12"><path d="M3.4 1.9v9.700M1.300 3.600h9.700" stroke="#333" stroke-width="0.7"/></svg>
<div style="left:19.5px;top:80px;width:16.5px;height:420px;background:#fff;"></div>
<div style="left:35px;top:80px;width:1px;height:420px;background:#f3f2ea;"></div>
<div style="left:21px;top:80.5px;width:12.5px;height:6px;background:#f6f5ef;border:1px solid #cfcec6;border-top:none;"></div>
<div style="left:21px;top:490.3px;width:12.5px;height:9px;background:#f6f5ef;border:1px solid #cfcec6;border-bottom:none;"></div>
<span class="vt" style="left:26.8px;top:106.5px;">1</span>
<span class="vt" style="left:26.8px;top:125.7px;">2</span>
<span class="vt" style="left:26.8px;top:144.9px;">3</span>
<span class="vt" style="left:26.8px;top:164.1px;">4</span>
<span class="vt" style="left:26.8px;top:183.3px;">5</span>
<span class="vt" style="left:26.8px;top:202.5px;">6</span>
<span class="vt" style="left:26.8px;top:221.7px;">7</span>
<span class="vt" style="left:26.8px;top:240.9px;">8</span>
<span class="vt" style="left:26.8px;top:260.1px;">9</span>
<span class="vt" style="left:26.8px;top:279.3px;">10</span>
<span class="vt" style="left:26.8px;top:298.5px;">11</span>
<span class="vt" style="left:26.8px;top:317.7px;">12</span>
<span class="vt" style="left:26.8px;top:336.9px;">13</span>
<span class="vt" style="left:26.8px;top:356.1px;">14</span>
<span class="vt" style="left:26.8px;top:375.3px;">15</span>
<span class="vt" style="left:26.8px;top:394.5px;">16</span>
<span class="vt" style="left:26.8px;top:413.7px;">17</span>
<span class="vt" style="left:26.8px;top:432.9px;">18</span>
<span class="vt" style="left:26.8px;top:452.1px;">19</span>
<span class="vt" style="left:26.8px;top:471.3px;">20</span>
<span class="vt" style="left:26.8px;top:490.5px;">21</span>
<div style="left:688px;top:64px;width:8.5px;height:436px;background:#f5f5f2;"></div>
<div style="left:688px;top:212.5px;width:8.7px;height:188px;background:#eeede5;border:1px solid #fff;border-right-color:#555;border-bottom-color:#555;"></div>
<div style="left:688px;top:65px;width:8.5px;height:6.5px;background:#fff;border:1px solid #333;border-right-color:#fff;border-bottom-color:#fff;"></div>
<div class="btn" style="left:688px;top:73.2px;width:8.5px;height:5.8px;"></div>
<div class="btn" style="left:688px;top:82px;width:8.5px;height:6.3px;"></div>
<div class="btn" style="left:688px;top:90.5px;width:8.5px;height:6.3px;"></div>
<div class="btn" style="left:688px;top:99px;width:8.5px;height:6.3px;"></div>
<div class="btn" style="left:688px;top:108px;width:8.5px;height:6.3px;"></div>
<div class="btn" style="left:688px;top:116.5px;width:8.5px;height:6.3px;"></div>
<svg style="left:688px;top:64px;" width="9" height="60" viewBox="0 0 9 60"><rect x="3" y="3" width="3.4" height="3" fill="none" stroke="#222" stroke-width="0.9"/><path d="M2.5 10.5h4M2.5 12h4M2.5 13.5h4" stroke="#333" stroke-width="0.9"/><path d="M2.5 19.5h4M2.5 21.5h4M4.5 19v3.5" stroke="#333" stroke-width="0.9"/><path d="M2.5 28h4M3 29.5h3M3.500 31h2" stroke="#333" stroke-width="0.9"/><path d="M3 36.500v4M6 36.500v4" stroke="#222" stroke-width="1.400" stroke-dasharray="1.600 0.800"/><rect x="3.200" y="46" width="2.600" height="2.600" fill="none" stroke="#222" stroke-width="1"/><path d="M2.500 57.500h4L4.500 55z" fill="#111"/></svg>
<div class="btn" style="left:688px;top:488px;width:8.5px;height:8.5px;"></div>
<svg style="left:690.300px;top:491px;" width="4" height="3" viewBox="0 0 4 3"><path d="M0 0h4L2 2.600z" fill="#111"/></svg>
<div style="left:687px;top:497.2px;width:9.5px;height:2px;background:#0a0a0a;"></div>
<div style="left:685.5px;top:499.5px;width:2.2px;height:8.3px;background:#0a0a0a;"></div>
<div style="left:687.7px;top:499.2px;width:9px;height:9px;background:#eeede5;"></div>
<div style="left:696.5px;top:11px;width:2.2px;height:517px;background:#e9e8e0;"></div>
<div style="left:698.6px;top:0px;width:1.4px;height:528px;background:linear-gradient(90deg,#777,#3c3c3c);"></div>
<div style="left:0px;top:11px;width:1.1px;height:517px;background:#8e8e8e;"></div>
<div style="left:1.1px;top:11px;width:1.3px;height:517px;background:#e3e2da;"></div>
<div style="left:20px;top:499px;width:665px;height:9.3px;background:#eeede5;"></div>
<div style="left:19.5px;top:499.5px;width:8.5px;height:9px;background:#fff;border:1px solid #222;border-right-color:#fff;border-bottom-color:#fff;"></div>
<div class="btn" style="left:28.5px;top:500px;width:8px;height:8.5px;"></div>
<div class="btn" style="left:37px;top:500px;width:8px;height:8.5px;"></div>
<div class="btn" style="left:45.5px;top:500px;width:8.6px;height:8.5px;"></div>
<div class="btn" style="left:54.3px;top:500px;width:8.6px;height:8.5px;"></div>
<div class="btn" style="left:63px;top:500px;width:8.6px;height:8.5px;"></div>
<div class="btn" style="left:71.8px;top:500px;width:8.6px;height:8.5px;"></div>
<svg style="left:19.5px;top:499.5px;" width="62" height="9" viewBox="0 0 62 9"><rect x="2.5" y="2.5" width="3" height="3" fill="none" stroke="#222" stroke-width="0.9"/><rect x="4" y="4" width="3" height="3" fill="#fff" stroke="#222" stroke-width="0.9"/><rect x="11.5" y="2.5" width="3.5" height="4" fill="#ddd" stroke="#333" stroke-width="0.9"/><rect x="20" y="2.5" width="4" height="4" fill="none" stroke="#444" stroke-width="0.9"/><path d="M21 4.5h2" stroke="#444" stroke-width="0.8"/><g fill="#d8d7cf" stroke="#a9a8a0" stroke-width="0.6"><path d="M29 2.5v4M32.5 2.5v4l-2.5-2z"/><path d="M41 2.5v4l-2.5-2z"/><path d="M47.5 2.5v4l2.5-2z"/><path d="M56 2.5v4l2.5-2zM59.3 2.5v4"/></g></svg>
<svg style="left:80px;top:499px;" width="32" height="10" viewBox="0 0 32 10"><path d="M0.5 0.5L4.5 9H25.5L29.500 0.500z" fill="#fff"/><path d="M0.500 0.500L4.500 9H25.500L29.500 0.500" fill="none" stroke="#222" stroke-width="1"/></svg>
<span class="t" style="left:85.8px;top:500.7px;font-size:6.3px;">Seite 1</span>
<div style="left:233.5px;top:499px;width:3px;height:9.3px;background:#eeede5;border-left:1px solid #fff;border-right:1px solid #444;"></div>
<div style="left:236.5px;top:499px;width:448.5px;height:9.3px;background:#f7f7f3;"></div>
<div class="btn" style="left:236.5px;top:499px;width:8.5px;height:9.3px;"></div>
<svg style="left:239px;top:502px;" width="3" height="4" viewBox="0 0 3 4"><path d="M3 0v4L0.2 2z" fill="#111"/></svg>
<div style="left:369.5px;top:499px;width:185px;height:9.3px;background:#eeede5;border:1px solid #fff;border-right-color:#666;border-bottom-color:#555;"></div>
<div class="btn" style="left:677px;top:499.2px;width:8.3px;height:8.6px;"></div>
<svg style="left:680px;top:502px;" width="3" height="4" viewBox="0 0 3 4"><path d="M0 0v4L2.8 2z" fill="#111"/></svg>
<div style="left:0px;top:509px;width:700px;height:1.5px;background:#eeede5;"></div>
<div style="left:2.5px;top:510px;width:233.5px;height:13.2px;border:1px solid #b4b3ab;border-right-color:#fbfbf8;border-bottom-color:#fbfbf8;"></div>
<div style="left:237px;top:510px;width:162.39999999999998px;height:13.2px;border:1px solid #b4b3ab;border-right-color:#fbfbf8;border-bottom-color:#fbfbf8;"></div>
<div style="left:400.4px;top:510px;width:27.600000000000023px;height:13.2px;border:1px solid #b4b3ab;border-right-color:#fbfbf8;border-bottom-color:#fbfbf8;"></div>
<div style="left:432px;top:510px;width:8px;height:13.2px;border:1px solid #b4b3ab;border-right-color:#fbfbf8;border-bottom-color:#fbfbf8;"></div>
<div style="left:443px;top:510px;width:107px;height:13.2px;border:1px solid #b4b3ab;border-right-color:#fbfbf8;border-bottom-color:#fbfbf8;"></div>
<div style="left:552px;top:510px;width:135.5px;height:13.2px;border:1px solid #b4b3ab;border-right-color:#fbfbf8;border-bottom-color:#fbfbf8;"></div>
<svg style="left:241.5px;top:512px;" width="8" height="7" viewBox="0 0 8 7"><path d="M2 0v6M0 2h6" stroke="#66c" stroke-width="0.8"/><rect x="3" y="3" width="4" height="3" fill="none" stroke="#666" stroke-width="0.8"/></svg>
<span class="t" style="left:252px;top:513.5px;font-size:7.5px;letter-spacing:0.45px;word-spacing:0.6px;">18,45 / -0,54</span>
<span class="t" style="left:407.5px;top:513.5px;font-size:7.5px;word-spacing:0.5px;">93%</span>
<span class="t" style="left:435px;top:513.5px;font-size:7.5px;word-spacing:0.5px;">*</span>
<span class="t" style="left:445px;top:513.5px;font-size:7.5px;word-spacing:0.5px;">Seite 1 / 1</span>
<span class="t" style="left:553.5px;top:513.5px;font-size:7.5px;word-spacing:0.5px;">Standard</span>
<div style="left:0px;top:523px;width:700px;height:1px;background:#a3a29c;"></div>
<div style="left:1.1px;top:524px;width:697.5px;height:2.8px;background:#e6e5dd;"></div>
<div style="left:11.2px;top:524px;width:1px;height:2.8px;background:#a3a29c;"></div>
<div style="left:687.4px;top:524px;width:1px;height:2.8px;background:#a3a29c;"></div>
<div style="left:0px;top:526.8px;width:700px;height:1.2px;background:#4a4a4a;"></div>
<!-- floating panel: Präsentation -->
<div style="left:36px;top:68.4px;width:86px;height:98.1px;background:#eeede5;border:1px solid #6a6a6a;border-left:1.5px solid #6e6e6e;border-right:1.700px solid #3c3c3c;border-bottom:1.500px solid #3c3c3c;"></div>
<div style="left:37px;top:69.4px;width:84px;height:96.1px;border:1px solid #fff;border-right-color:#a9a8a1;border-bottom-color:#a9a8a1;"></div>
<div style="left:38px;top:69.9px;width:82.5px;height:9.3px;background:#d6d6d6;"></div>
<svg style="left:40.5px;top:70.9px;" width="7" height="7" viewBox="0 0 7 7"><rect x="0.5" y="0.5" width="6" height="6" fill="#f4f4f4" stroke="#999" stroke-width="0.8"/><rect x="1.6" y="2" width="2.4" height="2.4" fill="#d55"/><rect x="3.2" y="3.4" width="2.2" height="2" fill="#66c"/></svg>
<span style="left:48.5px;top:70.0px;font-size:8.6px;font-weight:bold;color:#111;">Präsentation</span>
<div style="left:112px;top:70.4px;width:8px;height:8px;background:#e9e9e9;border:1px solid #fff;border-right-color:#444;border-bottom-color:#444;"></div>
<svg style="left:112px;top:70.4px;" width="8" height="8" viewBox="0 0 8 8"><path d="M2.2 2.2l3.4 3.6M5.6 2.2l-3.4 3.6" stroke="#111" stroke-width="1.3"/></svg>
<span class="t" style="left:38px;width:82px;text-align:center;top:83.6px;">Seite einfügen...</span>
<span class="t" style="left:38px;width:82px;text-align:center;top:100.1px;">Seitenlayout ändern...</span>
<span class="t" style="left:38px;width:82px;text-align:center;top:116.8px;">Seitenvorlage...</span>
<span class="t" style="left:38px;width:82px;text-align:center;top:133.3px;">Seite duplizieren</span>
<span class="t" style="left:38px;width:82px;text-align:center;top:149.7px;color:#c3c2bb;">Seite erweitern</span>

<div style="left:38px;top:162.500px;width:82.500px;height:2.600px;background:#d3d2ca;"></div>
<div style="left:47px;top:162.500px;width:1px;height:2.600px;background:#b5b4ac;"></div><div style="left:110px;top:162.500px;width:1px;height:2.600px;background:#b5b4ac;"></div>
<!-- stylist panel: Präsentationsobjektvorlagen -->
<div style="left:521.4px;top:85.3px;width:163.200px;height:308.700px;background:#eeede5;border:1px solid #6a6a6a;border-left:2px solid #6e7078;border-right:1.700px solid #3c3c3c;border-bottom:1.500px solid #3c3c3c;"></div>
<div style="left:521.400px;top:86px;width:2px;height:22px;background:linear-gradient(#3f66d2,#3f66d2 45%,#6e7078);"></div>
<div style="left:523.5px;top:86.5px;width:160px;height:306.5px;border:1px solid #fff;border-right-color:#a9a8a1;border-bottom-color:#a9a8a1;"></div>
<div style="left:524px;top:86.400px;width:149px;height:9.200px;background:#3d66d6;"></div>
<div style="left:663.500px;top:86.400px;width:9.500px;height:9.200px;background:repeating-linear-gradient(90deg,#3058c4 0,#3058c4 1px,#4a72de 1px,#4a72de 2px);opacity:.8;"></div>
<svg style="left:525px;top:87.5px;" width="16" height="8" viewBox="0 0 16 8"><rect x="0.5" y="0.5" width="6" height="7" fill="#f4f4f4" stroke="#bbb" stroke-width="0.8"/><rect x="1.6" y="2" width="2.4" height="2.4" fill="#d55"/><rect x="3.2" y="4" width="2.2" height="2" fill="#66c"/><path d="M7 3.700h3.600" stroke="#fff" stroke-width="0.900"/><path d="M11 1.200v5M14.200 1.700v4" stroke="#fff" stroke-width="1.100"/><path d="M11 2.500h3.200M11 4.900h3.200" stroke="#fff" stroke-width="0.700"/></svg>
<span style="left:541.800px;top:86.800px;font-size:8.780px;font-weight:bold;color:#fff;">Präsentationsobjektvorlagen</span>
<div style="left:674px;top:87px;width:8px;height:8.5px;background:#e9e9e9;border:1px solid #fff;border-right-color:#444;border-bottom-color:#444;"></div>
<svg style="left:674px;top:87px;" width="8" height="8.5" viewBox="0 0 8 8.5"><path d="M2.2 2.3l3.4 3.8M5.6 2.3l-3.4 3.8" stroke="#111" stroke-width="1.3"/></svg>
<!-- panel toolbar -->
<svg class="ic" style="left:526.500px;top:99.500px;" width="9" height="9" viewBox="0 0 9 9"><path d="M0.800 7.600h7V5.200H5.600L6.400 3.400 5 0.900 3.400 1.600 3.600 3.400 2.600 5.200H0.800z" stroke="#444" stroke-width="0.800" fill="#f2f1ea"/></svg>
<div style="left:537.300px;top:98px;width:12.700px;height:12.400px;background:#cfdcf5;border:1px solid #9bb4e6;"></div>
<svg class="ic" style="left:539.200px;top:100px;" width="9" height="9" viewBox="0 0 9 9"><rect x="0.600" y="0.600" width="7.800" height="5.600" fill="#fff" stroke="#1a1a6a" stroke-width="1.100"/><rect x="2" y="1.800" width="5" height="3" fill="#e8e49a"/><path d="M4.5 6.2V8M2.5 8.4h4" stroke="#222" stroke-width="0.9"/><circle cx="5.5" cy="3.2" r="1" fill="#3a3"/></svg>
<svg style="left:643px;top:98.5px;" width="37" height="11" viewBox="0 0 37 11"><g stroke="#b8b7b0" fill="none" stroke-width="1"><path d="M1.5 7l3-4.5 4 1.5-2.5 5zM3 2l5 5"/><path d="M14 3h3M14 5.5h3M14 8h3M18.5 3h2M18.5 5.5h2M18.5 8h2"/><rect x="26.5" y="1.5" width="8" height="8"/><path d="M30.5 1.5v8M27.5 4h2M27.5 6.5h2M31.5 4h2M31.5 6.5h2"/></g></svg>
<!-- list -->
<div style="left:525px;top:112px;width:157.5px;height:258.5px;background:#fff;border:1px solid #555;border-right-color:#d9d8d0;border-bottom-color:#d9d8d0;"></div>
<div style="left:526px;top:113px;width:44.5px;height:10.5px;border:1px dotted #8c8c8c;"></div>
<span class="li" style="top:114.8px;">Gliederung 1</span>
<span class="li" style="top:125.73px;">Gliederung 2</span>
<span class="li" style="top:136.66px;">Gliederung 3</span>
<span class="li" style="top:147.59px;">Gliederung 4</span>
<span class="li" style="top:158.52px;">Gliederung 5</span>
<span class="li" style="top:169.45px;">Gliederung 6</span>
<span class="li" style="top:180.38px;">Gliederung 7</span>
<span class="li" style="top:191.31px;">Gliederung 8</span>
<span class="li" style="top:202.24px;">Gliederung 9</span>
<span class="li" style="top:213.17px;">Hintergrund</span>
<span class="li" style="top:224.1px;">Hintergrundobjekte</span>
<span class="li" style="top:235.03px;">Notizen</span>
<span class="li" style="top:245.96px;">Titel</span>
<span class="li" style="top:256.89px;">Untertitel</span>
<!-- combobox -->
<div class="sunk" style="left:525px;top:374px;width:154px;height:13.5px;"></div>
<span class="t" style="left:526.500px;top:376.800px;">Alle Vorlagen</span>
<div class="btn" style="left:671.5px;top:375px;width:7px;height:11.5px;"></div>
<svg style="left:672.7px;top:379.5px;" width="4.4" height="3" viewBox="0 0 5 3"><path d="M0 0h5L2.5 3z" fill="#111"/></svg>
<div style="left:524.500px;top:390.300px;width:158px;height:2.300px;background:#d5d4cc;"></div>
<div style="left:532px;top:390.300px;width:1px;height:2.300px;background:#b5b4ac;"></div>
<div style="left:672px;top:390.300px;width:1px;height:2.300px;background:#b5b4ac;"></div>

</div></body></html>
